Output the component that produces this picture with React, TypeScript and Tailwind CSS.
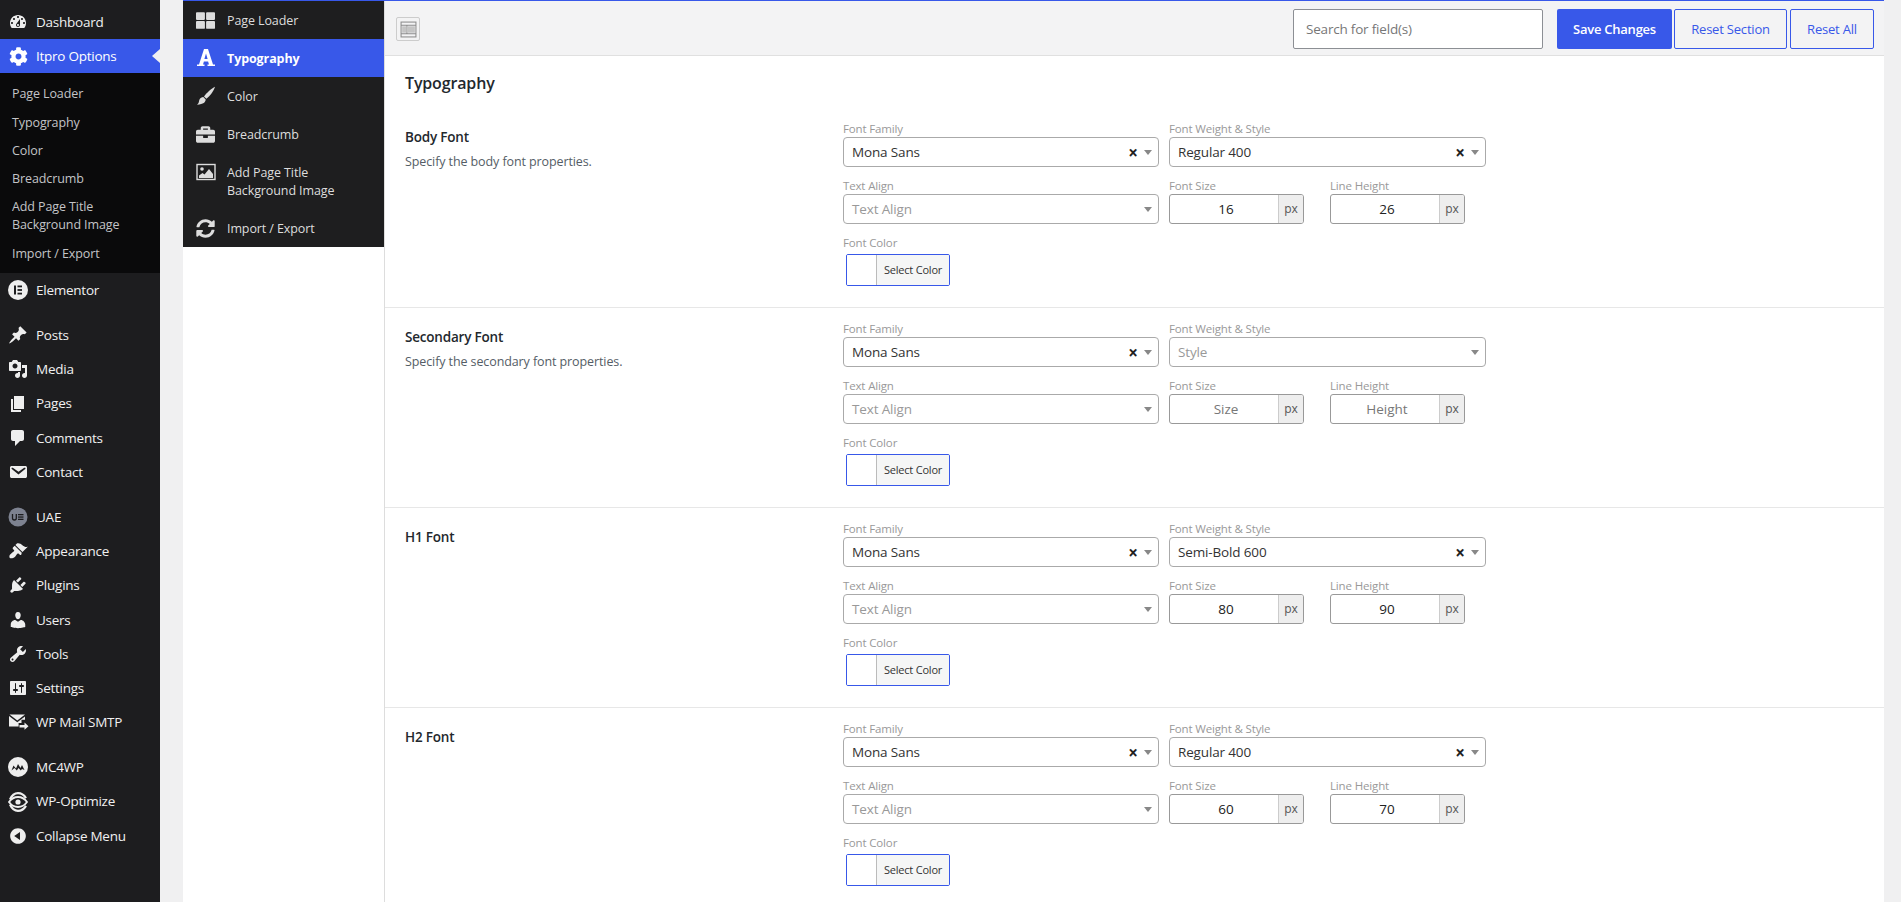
import { FaBriefcase, FaCog, FaSyncAlt, FaThLarge } from "react-icons/fa"

const dash: Record<string, string> = {
  dashboard: "M3.76 16h12.48c1.1-1.37 1.76-3.11 1.76-5 0-4.42-3.58-8-8-8s-8 3.58-8 8c0 1.89.66 3.63 1.76 5zM10 4c.55 0 1 .45 1 1s-.45 1-1 1-1-.45-1-1 .45-1 1-1zM6 6c.55 0 1 .45 1 1s-.45 1-1 1-1-.45-1-1 .45-1 1-1zm8 0c.55 0 1 .45 1 1s-.45 1-1 1-1-.45-1-1 .45-1 1-1zm-5.37 5.55L12 7v6c0 1.1-.9 2-2 2s-2-.9-2-2c0-.57.24-1.08.63-1.45zM4 10c.55 0 1 .45 1 1s-.45 1-1 1-1-.45-1-1 .45-1 1-1zm12 0c.55 0 1 .45 1 1s-.45 1-1 1-1-.45-1-1 .45-1 1-1zm-5 3c0-.55-.45-1-1-1s-1 .45-1 1 .45 1 1 1 1-.45 1-1z",
  posts: "M10.44 3.02l1.82-1.82 6.36 6.35-1.83 1.82c-1.05-.68-2.48-.57-3.41.36l-.75.75c-.92.93-1.04 2.35-.35 3.41l-1.83 1.82-2.41-2.41-2.8 2.79c-.42.42-3.38 2.71-3.8 2.29s1.86-3.39 2.28-3.81l2.79-2.79L4.1 9.36l1.83-1.82c1.05.69 2.48.57 3.4-.36l.75-.75c.93-.92 1.05-2.35.36-3.41z",
  media: "M13 11V4c0-.55-.45-1-1-1h-1.67L9 1H5L3.67 3H2c-.55 0-1 .45-1 1v7c0 .55.45 1 1 1h10c.55 0 1-.45 1-1zM7 4.5c1.38 0 2.5 1.12 2.5 2.5S8.38 9.5 7 9.5 4.5 8.38 4.5 7 5.62 4.5 7 4.5zM14 6h5v10.5c0 1.38-1.12 2.5-2.5 2.5S14 17.88 14 16.5s1.12-2.5 2.5-2.5c.17 0 .34.02.5.05V9h-3V6zm-4 8.05V13h2v3.5c0 1.38-1.12 2.5-2.5 2.5S7 17.88 7 16.5 8.12 14 9.5 14c.17 0 .34.02.5.05z",
  pages: "M6 15V2h10v13H6zm-1 1h8v2H3V5h2v11z",
  comments: "M5 2h9c1.1 0 2 .9 2 2v7c0 1.1-.9 2-2 2h-2l-5 5v-5H5c-1.1 0-2-.9-2-2V4c0-1.1.9-2 2-2z",
  email: "M3.87 4h13.25C18.37 4 19 4.59 19 5.79v8.42c0 1.19-.63 1.79-1.88 1.79H3.87c-1.25 0-1.88-.6-1.88-1.79V5.79c0-1.2.63-1.79 1.88-1.79zm6.62 8.6l6.74-5.53c.24-.2.43-.66.13-1.07-.29-.41-.82-.42-1.17-.17l-5.7 3.86L4.8 5.83c-.35-.25-.88-.24-1.17.17-.3.41-.11.87.13 1.07z",
  appearance: "M14.48 11.06L7.41 3.99l1.5-1.5c.5-.56 2.3-.47 3.51.32 1.21.8 1.43 1.28 2.91 2.1 1.18.64 2.45 1.26 4.45.85zm-.71.71L6.7 4.7 4.93 6.47c-.39.39-.39 1.02 0 1.41l1.06 1.06c.39.39.39 1.03 0 1.42-.6.6-1.43 1.11-2.21 1.69-.35.26-.7.53-1.01.84C1.43 13.23.91 15.98 1.81 16.88c.9.9 3.65.38 5.01-.98.31-.31.58-.66.84-1.01.58-.78 1.09-1.61 1.69-2.21.39-.39 1.03-.39 1.42 0l1.06 1.06c.39.39 1.02.39 1.41 0z",
  plugins: "M13.11 4.36L9.87 7.6 8 5.73l3.24-3.24c.35-.34 1.05-.2 1.56.32.52.51.66 1.21.31 1.55zm-8 1.77l.91-1.12 9.01 9.01-1.19.84c-.71.71-2.63 1.16-3.82 1.16H6.14L4.9 17.26c-.59.59-1.54.59-2.12 0-.59-.58-.59-1.53 0-2.12l1.24-1.24v-3.88c0-1.13.4-3.19 1.09-3.89zm7.26 3.97l3.24-3.24c.34-.35 1.04-.21 1.55.31.52.51.66 1.21.31 1.55l-3.24 3.25z",
  users: "M10 9.25c-2.27 0-2.73-3.44-2.73-3.44C7 4.02 7.82 2 9.97 2c2.16 0 2.98 2.02 2.71 3.81 0 0-.41 3.44-2.68 3.44zm0 2.57L12.72 10c2.39 0 4.52 2.33 4.52 4.53v2.49s-3.65 1.13-7.24 1.13c-3.65 0-7.24-1.13-7.24-1.13v-2.49c0-2.25 1.94-4.48 4.47-4.48z",
  tools: "M16.68 9.77c-1.34 1.34-3.3 1.67-4.95.99l-5.41 6.52c-.99.99-2.59.99-3.58 0s-.99-2.59 0-3.57l6.52-5.42c-.68-1.65-.35-3.61.99-4.95 1.28-1.28 3.12-1.62 4.72-1.06l-2.89 2.89 2.82 2.82 2.86-2.87c.53 1.58.18 3.39-1.08 4.65zM3.81 16.21c.4.39 1.04.39 1.43 0 .4-.4.4-1.04 0-1.43-.39-.4-1.03-.4-1.43 0-.39.39-.39 1.03 0 1.43z",
  settings: "M18 16V4c0-.55-.45-1-1-1H3c-.55 0-1 .45-1 1v12c0 .55.45 1 1 1h14c.55 0 1-.45 1-1zM8 11h1c.55 0 1 .45 1 1s-.45 1-1 1H8v1.5c0 .28-.22.5-.5.5s-.5-.22-.5-.5V13H6c-.55 0-1-.45-1-1s.45-1 1-1h1V5.5c0-.28.22-.5.5-.5s.5.22.5.5V11zm5-2h-1c-.55 0-1-.45-1-1s.45-1 1-1h1V5.5c0-.28.22-.5.5-.5s.5.22.5.5V7h1c.55 0 1 .45 1 1s-.45 1-1 1h-1v5.5c0 .28-.22.5-.5.5s-.5-.22-.5-.5V9z",
  collapse: "M10 2.16c4.33 0 7.84 3.51 7.84 7.84s-3.51 7.84-7.84 7.84S2.16 14.33 2.16 10 5.71 2.16 10 2.16zm2 11.72V6.12L6.18 9.97z",
}

function Dash({ name }: { name: string }) {
  return (
    <svg viewBox="0 0 20 20" className="h-5 w-5 fill-[#eeeeee]">
      <path d={dash[name]} />
    </svg>
  )
}

function ElementorIcon() {
  return (
    <svg viewBox="0 0 20 20" className="h-5 w-5">
      <circle cx="10" cy="10" r="10" fill="#eeeeee" />
      <rect x="6" y="5.5" width="2" height="9" fill="#1d1d1f" />
      <rect x="9.5" y="5.5" width="4.5" height="1.8" fill="#1d1d1f" />
      <rect x="9.5" y="9.1" width="4.5" height="1.8" fill="#1d1d1f" />
      <rect x="9.5" y="12.7" width="4.5" height="1.8" fill="#1d1d1f" />
    </svg>
  )
}

function UaeIcon() {
  return (
    <svg viewBox="0 0 20 20" className="h-5 w-5">
      <circle cx="10" cy="10" r="9.5" fill="#7d8290" />
      <path d="M4.5 7v4.2c0 1.2.8 1.8 1.9 1.8s1.9-.6 1.9-1.8V7" fill="none" stroke="#1d1d1f" strokeWidth="1.3" />
      <rect x="10" y="7" width="5.5" height="1.3" fill="#1d1d1f" />
      <rect x="10" y="9.4" width="5.5" height="1.3" fill="#1d1d1f" />
      <rect x="10" y="11.7" width="5.5" height="1.3" fill="#1d1d1f" />
    </svg>
  )
}

function MailSmtpIcon() {
  return (
    <svg viewBox="0 0 20 20" className="h-5 w-5 fill-[#eeeeee] overflow-visible">
      <path d="M1.5 2.5h15.5l-7.7 6zM1 4l8.3 6.3L17 4.4v3.4h-3.5v3.2h-2.9v3.5H1z" />
      <path d="M11.5 13h5v-2.4l4 3.6-4 3.6v-2.4h-5z" />
    </svg>
  )
}

function Mc4wpIcon() {
  return (
    <svg viewBox="0 0 20 20" className="h-5 w-5">
      <circle cx="10" cy="10" r="10" fill="#eeeeee" />
      <path d="M3.5 13.5l2-5 2.5 3 2-4.5 2.5 4 1.5-3 2.5 5-2.5-1-1.2 1.5-2.3-2.5-1.7 2.5-2.3-2.5z" fill="#1d1d1f" />
    </svg>
  )
}

function OptimizeIcon() {
  return (
    <svg viewBox="0 0 20 20" className="h-5 w-5" fill="none" stroke="#eeeeee">
      <path d="M2 7.5C4 3 7 1.2 10 1.2c3 0 6 1.8 8 5" strokeWidth="2.2" />
      <path d="M1 10c2.5-3.5 5.5-5 9-5s6.5 1.5 9 5c-2.5 3.5-5.5 5-9 5s-6.5-1.5-9-5z" strokeWidth="1.8" />
      <circle cx="10" cy="10" r="2.6" fill="#eeeeee" stroke="none" />
      <path d="M2 12.5c2 4.5 5 6.3 8 6.3 3 0 6-1.8 8-5" strokeWidth="2.2" />
    </svg>
  )
}

function FontIcon() {
  return (
    <svg viewBox="0 0 20 20" className="h-5 w-5 fill-white">
      <path fillRule="evenodd" d="M8 1h4l5 15.6h2V18h-7.500v-1.400h1.500l-.9-3H7.900l-.9 3h1.500V18H1v-1.400h2zM8.400 11h3.200L10 5.500z" />
    </svg>
  )
}

function BrushIcon() {
  return (
    <svg viewBox="0 0 20 20" className="h-5 w-5 fill-[#dddddd]">
      <path d="M19 .8c-1.200 4-4.800 9-8.600 12L8 10.400C10.800 6.800 15.500 2.500 19 .8z" />
      <path d="M7.300 11l2.400 2.500c-.2 2.500-2 4.800-8.700 5.200 2.300-1.500 1.700-3.400 2.500-5.200.6-1.400 2.400-2.200 3.800-2.500z" />
    </svg>
  )
}

function PictureIcon() {
  return (
    <svg viewBox="0 0 20 18" className="h-[18px] w-5">
      <rect x="1" y="1.5" width="18" height="15" fill="none" stroke="#dddddd" strokeWidth="1.4" />
      <circle cx="6" cy="6" r="1.8" fill="#dddddd" />
      <path d="M3 15v-2.500L6.500 10l2 1.500L13 6l4 5v4z" fill="#dddddd" />
    </svg>
  )
}

function SideRow({ icon, label, active }: { icon: React.ReactNode; label: string; active?: boolean }) {
  return (
    <div className={`relative flex h-[34.2px] items-center ${active ? "bg-[#3858e9] text-white" : "text-[#f0f0f1]"}`}>
      <span className="flex w-9 shrink-0 justify-center">{icon}</span>
      <span className="text-[13.5px] tracking-[-0.25px]">{label}</span>
      {active && (
        <span className="absolute right-0 top-[10px] h-0 w-0 border-y-[7px] border-r-[8px] border-y-transparent border-r-[#f0f0f1]" />
      )}
    </div>
  )
}

function Sidebar() {
  return (
    <aside className="w-40 shrink-0 bg-[#1d1d1f] pt-[5px]">
      <SideRow icon={<Dash name="dashboard" />} label="Dashboard" />
      <SideRow icon={<FaCog className="h-[19px] w-[19px] text-white" />} label="Itpro Options" active />
      <div className="flex h-[200px] flex-col bg-[#0a0a0b] pl-3 pt-[12px] text-[12.5px] leading-[18px] tracking-[-0.1px] text-[#c3c4c7]">
        <span className="mb-[11px]">Page Loader</span>
        <span className="mb-[10px]">Typography</span>
        <span className="mb-[10px]">Color</span>
        <span className="mb-[10px]">Breadcrumb</span>
        <span className="mb-[11px]">Add Page Title<br />Background Image</span>
        <span>Import / Export</span>
      </div>
      <SideRow icon={<ElementorIcon />} label="Elementor" />
      <div className="h-[10.5px]" />
      <SideRow icon={<Dash name="posts" />} label="Posts" />
      <SideRow icon={<Dash name="media" />} label="Media" />
      <SideRow icon={<Dash name="pages" />} label="Pages" />
      <SideRow icon={<Dash name="comments" />} label="Comments" />
      <SideRow icon={<Dash name="email" />} label="Contact" />
      <div className="h-[11px]" />
      <SideRow icon={<UaeIcon />} label="UAE" />
      <SideRow icon={<Dash name="appearance" />} label="Appearance" />
      <SideRow icon={<Dash name="plugins" />} label="Plugins" />
      <SideRow icon={<Dash name="users" />} label="Users" />
      <SideRow icon={<Dash name="tools" />} label="Tools" />
      <SideRow icon={<Dash name="settings" />} label="Settings" />
      <SideRow icon={<MailSmtpIcon />} label="WP Mail SMTP" />
      <div className="h-[11px]" />
      <SideRow icon={<Mc4wpIcon />} label="MC4WP" />
      <SideRow icon={<OptimizeIcon />} label="WP-Optimize" />
      <SideRow icon={<Dash name="collapse" />} label="Collapse Menu" />
    </aside>
  )
}

function NavRow({ icon, label, active, tall }: { icon: React.ReactNode; label: React.ReactNode; active?: boolean; tall?: boolean }) {
  return (
    <div
      className={`flex ${tall ? "h-[56px] items-start pt-[10px]" : "h-[38px] items-center"} ${active ? "bg-[#3858e9] font-bold text-white" : "text-[#dddddd]"}`}
    >
      <span className="flex w-[44px] shrink-0 justify-center pl-[1px] text-[19px] text-[#dddddd]">{icon}</span>
      <span className="pt-[1px] text-[12.5px] leading-[18px] tracking-[-0.1px]">{label}</span>
    </div>
  )
}

function OptionsNav() {
  return (
    <div className="w-[201px] shrink-0 bg-white">
      <div className="bg-[#1e1e1f]">
        <NavRow icon={<FaThLarge />} label="Page Loader" />
        <NavRow icon={<FontIcon />} label="Typography" active />
        <NavRow icon={<BrushIcon />} label="Color" />
        <NavRow icon={<FaBriefcase />} label="Breadcrumb" />
        <NavRow icon={<PictureIcon />} label={<>Add Page Title<br />Background Image</>} tall />
        <NavRow icon={<FaSyncAlt />} label="Import / Export" />
      </div>
    </div>
  )
}

function Toolbar() {
  return (
    <div className="flex h-[55px] items-center border-b border-[#e0e0e0] bg-[#f3f3f4] pl-[11px] pr-[10px] pt-[2px]">
      <div className="flex h-6 w-6 items-center justify-center rounded-[2px] border border-[#cccccc]">
        <svg viewBox="0 0 16 16" className="h-[17px] w-[17px]" fill="#c4c4c4" stroke="#8c8c8c">
          <rect x="1" y="1" width="14" height="14" fill="none" />
          <path d="M1 4h14M1 12h14M6.5 4v8" fill="none" />
          <rect x="2" y="5" width="4" height="6" stroke="none" />
          <rect x="7" y="5" width="7" height="6" stroke="none" />
        </svg>
      </div>
      <div className="ml-auto flex h-10 w-[250px] items-center rounded-[2px] border border-[#8c8f94] bg-white pl-3 pt-[1px] text-[13.5px] tracking-[-0.2px] text-[#777777]">
        Search for field(s)
      </div>
      <button className="ml-[14px] h-10 w-[115px] rounded-[2px] bg-[#3858e9] pt-[1px] text-[13px] font-semibold tracking-[-0.25px] text-white">
        Save Changes
      </button>
      <button className="ml-[2px] h-10 w-[113px] rounded-[2px] border border-[#3858e9] pt-[1px] text-[13px] tracking-[-0.2px] text-[#3858e9]">
        Reset Section
      </button>
      <button className="ml-[3px] h-10 w-[84px] rounded-[2px] border border-[#3858e9] pt-[1px] text-[13px] tracking-[-0.2px] text-[#3858e9]">
        Reset All
      </button>
    </div>
  )
}

function FieldLabel({ children }: { children: React.ReactNode }) {
  return <div className="h-4 text-[11.5px] leading-4 tracking-[-0.15px] text-[#999999]">{children}</div>
}

function SelectBox({ value, placeholder, clearable }: { value: string; placeholder?: boolean; clearable?: boolean }) {
  return (
    <div className="flex h-[30px] w-full items-center rounded-[4px] border border-[#aaaaaa] bg-white pl-2 pr-[6px]">
      <span className={`grow text-[13.5px] tracking-[-0.15px] ${placeholder ? "text-[#999999]" : "text-[#333333]"}`}>{value}</span>
      {clearable && <span className="mr-[6px] text-[17px] font-bold leading-none text-[#222222]">×</span>}
      <span className="h-0 w-0 border-x-4 border-t-[5px] border-x-transparent border-t-[#888888]" />
    </div>
  )
}

function NumberBox({ value, placeholder }: { value: string; placeholder?: boolean }) {
  return (
    <div className="flex h-[30px] w-full overflow-hidden rounded-[3px] border border-[#999999] bg-white">
      <span className={`flex grow items-center justify-center pl-1 text-[13.5px] ${placeholder ? "text-[#777777]" : "text-[#222222]"}`}>{value}</span>
      <span className="flex w-[25px] items-center justify-center border-l border-[#cccccc] bg-[#eeeeee] text-[12px] text-[#555555]">px</span>
    </div>
  )
}

type FontSection = {
  title: string
  desc?: string
  weight: string
  size: string
  height: string
}

const sections: FontSection[] = [
  { title: "Body Font", desc: "Specify the body font properties.", weight: "Regular 400", size: "16", height: "26" },
  { title: "Secondary Font", desc: "Specify the secondary font properties.", weight: "", size: "", height: "" },
  { title: "H1 Font", weight: "Semi-Bold 600", size: "80", height: "90" },
  { title: "H2 Font", weight: "Regular 400", size: "60", height: "70" },
]

function FontRow({ s }: { s: FontSection }) {
  return (
    <div className="flex h-[200px] border-b border-[#e7e7e7]">
      <div className="w-[458px] shrink-0 pl-5 pt-[19px]">
        <div className="h-5 text-[13.5px] font-semibold leading-5 tracking-[-0.2px] text-[#23282d]">{s.title}</div>
        {s.desc && <div className="mt-[5px] h-5 text-[12.5px] leading-5 tracking-[-0.1px] text-[#555d66]">{s.desc}</div>}
      </div>
      <div className="pt-[13px]">
        <div className="flex gap-[10px]">
          <div className="w-[316px]">
            <FieldLabel>Font Family</FieldLabel>
            <SelectBox value="Mona Sans" clearable />
          </div>
          <div className="w-[317px]">
            <FieldLabel>Font Weight &amp; Style</FieldLabel>
            {s.weight ? <SelectBox value={s.weight} clearable /> : <SelectBox value="Style" placeholder />}
          </div>
        </div>
        <div className="mt-[11px] flex gap-[10px]">
          <div className="w-[316px]">
            <FieldLabel>Text Align</FieldLabel>
            <SelectBox value="Text Align" placeholder />
          </div>
          <div className="w-[135px]">
            <FieldLabel>Font Size</FieldLabel>
            {s.size ? <NumberBox value={s.size} /> : <NumberBox value="Size" placeholder />}
          </div>
          <div className="ml-4 w-[135px]">
            <FieldLabel>Line Height</FieldLabel>
            {s.height ? <NumberBox value={s.height} /> : <NumberBox value="Height" placeholder />}
          </div>
        </div>
        <div className="mt-[11px]">
          <FieldLabel>Font Color</FieldLabel>
          <div className="ml-[3px] mt-[3px] flex h-8 w-[104px] overflow-hidden rounded-[2px] border border-[#3858e9]">
            <span className="w-[30px] border-r border-[#bbbbbb] bg-white" />
            <span className="flex grow items-center justify-center bg-[#f5f6f6] pt-[1px] text-[11px] tracking-[-0.2px] text-[#333333]">Select Color</span>
          </div>
        </div>
      </div>
    </div>
  )
}

export default function App() {
  return (
    <div className="flex h-[902px] overflow-hidden bg-[#f0f0f1] font-['Open_Sans',sans-serif]">
      <Sidebar />
      <div className="ml-[23px] mr-[17px] flex h-[1000px] grow border-t border-[#3858e9]">
        <OptionsNav />
        <div className="grow border-l border-[#dddddd] bg-white">
          <Toolbar />
          <h2 className="flex h-[52px] items-center pl-5 pt-[2px] text-[16px] font-semibold tracking-[-0.15px] text-[#23282d]">Typography</h2>
          {sections.map((s) => (
            <FontRow key={s.title} s={s} />
          ))}
        </div>
      </div>
    </div>
  )
}
